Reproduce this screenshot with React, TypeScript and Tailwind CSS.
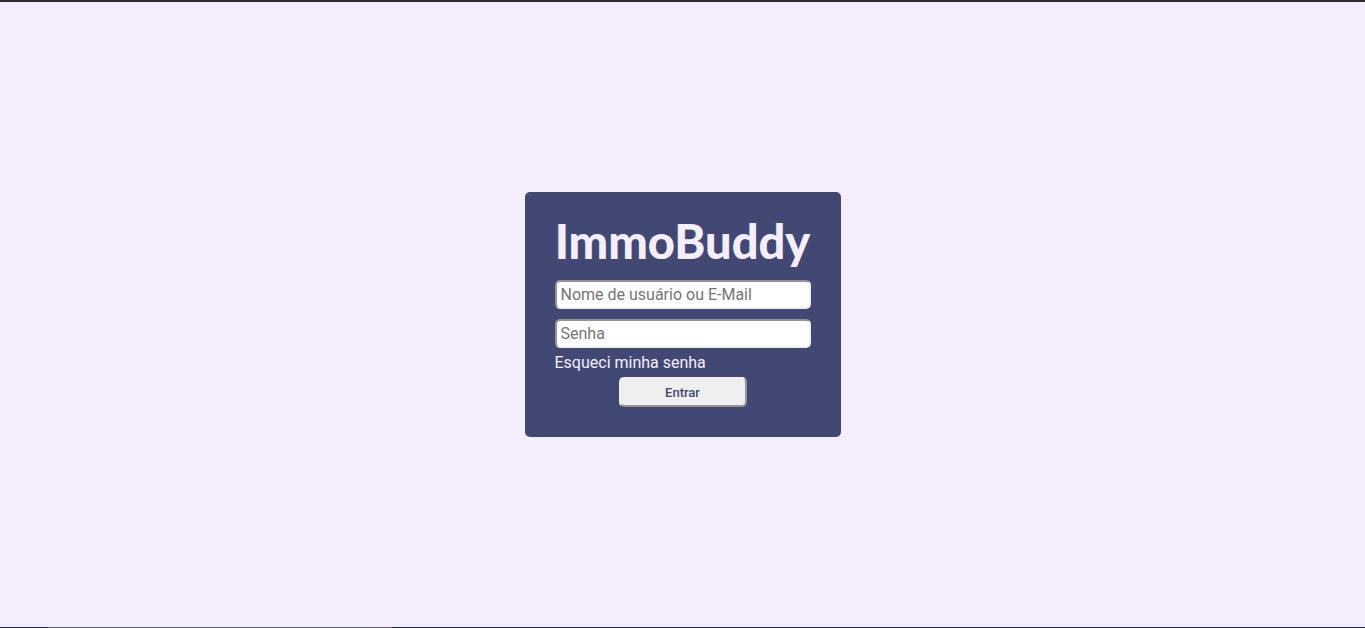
export default function App() {
  return (
    <div className="flex min-h-screen flex-col bg-[#f4eeff] font-['Roboto',sans-serif] text-base">
      <div className="h-0.5 bg-[#302c31]" />
      <main className="flex flex-1 items-center justify-center">
        <form
          className="flex w-[316px] flex-col rounded-[5px] bg-[#424874] p-[30px]"
          onSubmit={(event) => event.preventDefault()}
        >
          <h1 className="mb-[10px] flex h-[38px] items-center justify-center font-['Lato',sans-serif] text-[47px] leading-[38px] font-black text-[#f4eeff]">
            ImmoBuddy
          </h1>
          <input
            type="text"
            aria-label="Nome de usuário ou E-Mail"
            placeholder="Nome de usuário ou E-Mail"
            className="mt-[10px] h-[29px] w-full rounded-[5px] border-2 border-t-[#949494] border-r-[#efefef] border-b-[#efefef] border-l-[#949494] bg-white px-1 text-black outline-none placeholder:text-[#757575]"
          />
          <input
            type="password"
            aria-label="Senha"
            placeholder="Senha"
            className="mt-[10px] h-[29px] w-full rounded-[5px] border-2 border-t-[#949494] border-r-[#efefef] border-b-[#efefef] border-l-[#949494] bg-white px-1 text-black outline-none placeholder:text-[#757575]"
          />
          <a href="#senha" className="my-[5px] self-start leading-[19px] text-[#f4eeff]">
            Esqueci minha senha
          </a>
          <button
            type="submit"
            className="h-[30px] w-1/2 self-center rounded-[5px] border-2 border-t-[#efefef] border-r-[#949494] border-b-[#949494] border-l-[#efefef] bg-[#efefef] pt-px text-[13px] font-medium text-[#424874]"
          >
            Entrar
          </button>
        </form>
      </main>
      <div className="flex h-px bg-[#202b3d]">
        <div className="ml-12 w-[344px] bg-[#626069]" />
      </div>
    </div>
  );
}
